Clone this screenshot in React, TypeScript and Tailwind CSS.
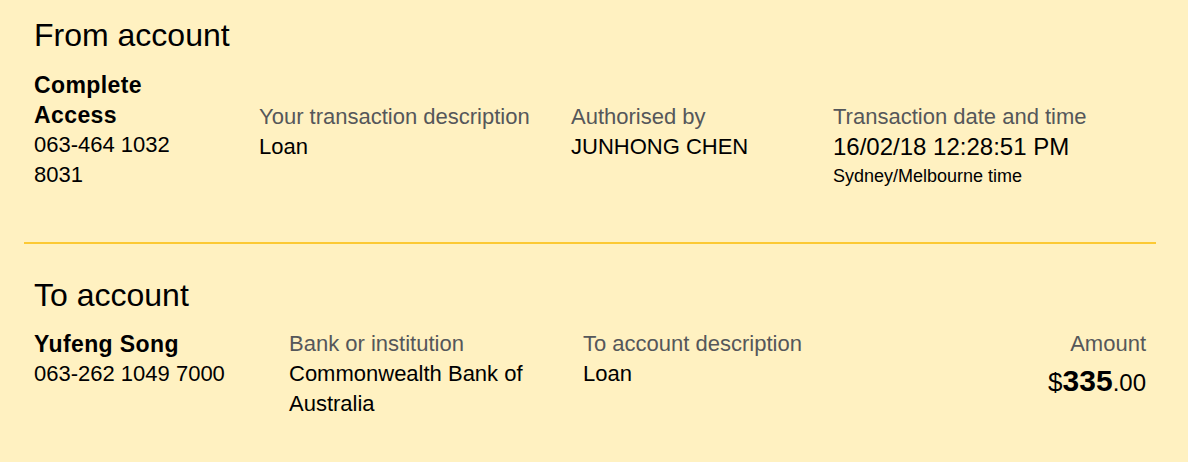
import React from "react";

const label = "text-[22px] leading-[30px] text-[#55575a]";
const value = "text-[22px] leading-[30px] text-black";
const strong = "text-[23px] leading-[30px] font-bold tracking-[0.4px]";

export default function App() {
  return (
    <div className="min-h-screen bg-[#fff1c1] pl-[24px] pr-[32px] font-['Liberation_Sans',Arial,sans-serif] text-black">
      {/* From account */}
      <section className="border-b-2 border-[#fcc934] px-[10px] pt-[15px] pb-[52px]">
        <h2 className="text-[32px] leading-[40px] font-normal">From account</h2>
        <div className="mt-[15px] grid grid-cols-[225px_312px_262px_1fr] items-start">
          <div className="w-[170px]">
            <p className={strong}>Complete Access</p>
            <p className={value}>063-464 1032 8031</p>
          </div>
          <div className="pt-[32px]">
            <p className={label}>Your transaction description</p>
            <p className={value}>Loan</p>
          </div>
          <div className="pt-[32px]">
            <p className={label}>Authorised by</p>
            <p className={value}>JUNHONG CHEN</p>
          </div>
          <div className="pt-[32px]">
            <p className={label}>Transaction date and time</p>
            <p className="text-[24px] leading-[30px]">16/02/18 12:28:51 PM</p>
            <p className="text-[18px] leading-[28px]">Sydney/Melbourne time</p>
          </div>
        </div>
      </section>

      {/* To account */}
      <section className="px-[10px] pt-[31px]">
        <h2 className="text-[32px] leading-[40px] font-normal">To account</h2>
        <div className="mt-[14px] grid grid-cols-[255px_294px_1fr_auto] items-start">
          <div>
            <p className={strong}>Yufeng Song</p>
            <p className={value}>063-262 1049 7000</p>
          </div>
          <div className="pr-[24px]">
            <p className={label}>Bank or institution</p>
            <p className={value}>Commonwealth Bank of Australia</p>
          </div>
          <div>
            <p className={label}>To account description</p>
            <p className={value}>Loan</p>
          </div>
          <div className="text-right">
            <p className={label}>Amount</p>
            <p className="text-[24px] leading-[48px]">
              <span className="text-[26px] leading-none">$</span>
              <span className="text-[30px] leading-none font-bold">335</span>
              <span className="leading-none">.00</span>
            </p>
          </div>
        </div>
      </section>
    </div>
  );
}
